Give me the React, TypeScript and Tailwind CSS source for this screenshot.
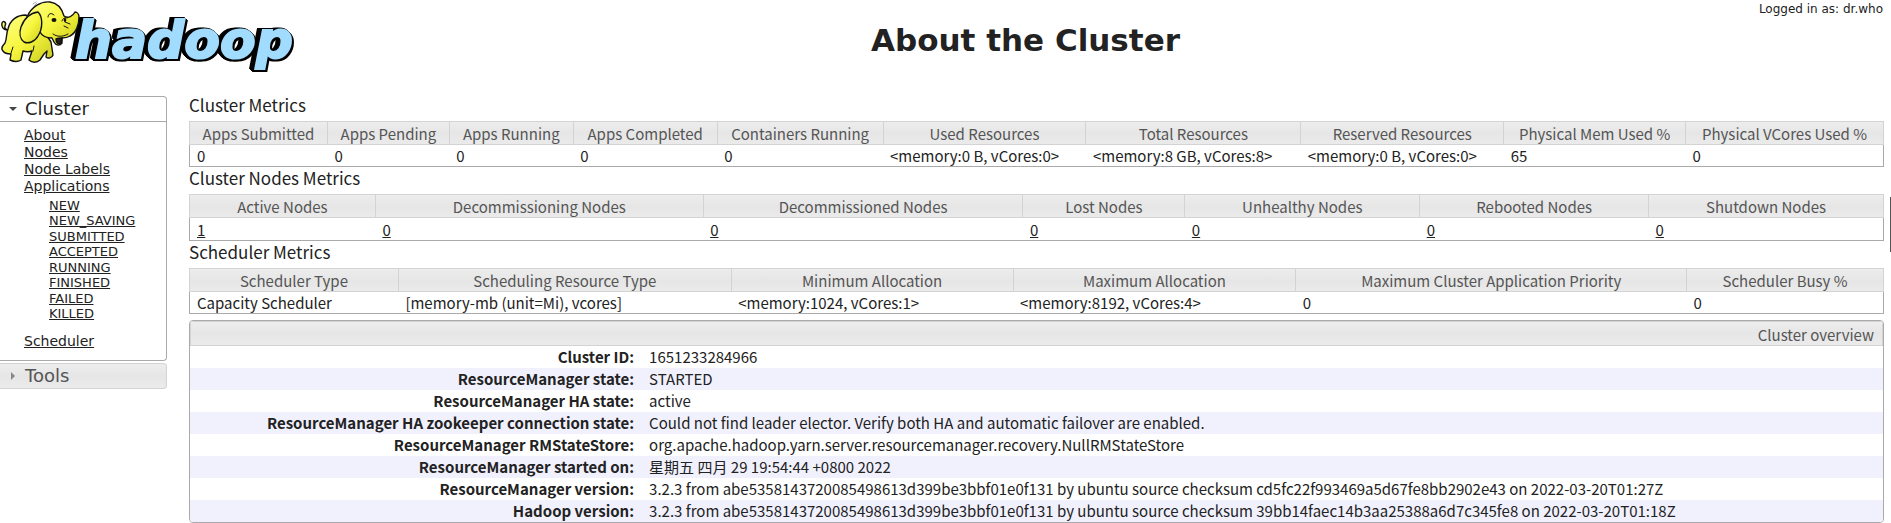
const links = ["About", "Nodes", "Node Labels", "Applications"];

const appStates = [
  "NEW",
  "NEW_SAVING",
  "SUBMITTED",
  "ACCEPTED",
  "RUNNING",
  "FINISHED",
  "FAILED",
  "KILLED",
];

// width is the column's share of the table
type Column = { title: string; value: string; width: number };

const clusterMetrics: Column[] = [
  { title: "Apps Submitted", value: "0", width: 138 },
  { title: "Apps Pending", value: "0", width: 122 },
  { title: "Apps Running", value: "0", width: 124 },
  { title: "Apps Completed", value: "0", width: 144 },
  { title: "Containers Running", value: "0", width: 166 },
  { title: "Used Resources", value: "<memory:0 B, vCores:0>", width: 203 },
  { title: "Total Resources", value: "<memory:8 GB, vCores:8>", width: 215 },
  { title: "Reserved Resources", value: "<memory:0 B, vCores:0>", width: 203 },
  { title: "Physical Mem Used %", value: "65", width: 182 },
  { title: "Physical VCores Used %", value: "0", width: 198 },
];

const nodesMetrics: Column[] = [
  { title: "Active Nodes", value: "1", width: 186 },
  { title: "Decommissioning Nodes", value: "0", width: 328 },
  { title: "Decommissioned Nodes", value: "0", width: 320 },
  { title: "Lost Nodes", value: "0", width: 162 },
  { title: "Unhealthy Nodes", value: "0", width: 235 },
  { title: "Rebooted Nodes", value: "0", width: 229 },
  { title: "Shutdown Nodes", value: "0", width: 235 },
];

const schedulerMetrics: Column[] = [
  { title: "Scheduler Type", value: "Capacity Scheduler", width: 209 },
  { title: "Scheduling Resource Type", value: "[memory-mb (unit=Mi), vcores]", width: 333 },
  { title: "Minimum Allocation", value: "<memory:1024, vCores:1>", width: 282 },
  { title: "Maximum Allocation", value: "<memory:8192, vCores:4>", width: 283 },
  { title: "Maximum Cluster Application Priority", value: "0", width: 391 },
  { title: "Scheduler Busy %", value: "0", width: 197 },
];

const overview = [
  ["Cluster ID:", "1651233284966"],
  ["ResourceManager state:", "STARTED"],
  ["ResourceManager HA state:", "active"],
  [
    "ResourceManager HA zookeeper connection state:",
    "Could not find leader elector. Verify both HA and automatic failover are enabled.",
  ],
  [
    "ResourceManager RMStateStore:",
    "org.apache.hadoop.yarn.server.resourcemanager.recovery.NullRMStateStore",
  ],
  ["ResourceManager started on:", "星期五 四月 29 19:54:44 +0800 2022"],
  [
    "ResourceManager version:",
    "3.2.3 from abe5358143720085498613d399be3bbf01e0f131 by ubuntu source checksum cd5fc22f993469a5d67fe8bb2902e43 on 2022-03-20T01:27Z",
  ],
  [
    "Hadoop version:",
    "3.2.3 from abe5358143720085498613d399be3bbf01e0f131 by ubuntu source checksum 39bb14faec14b3aa25388a6d7c345fe8 on 2022-03-20T01:18Z",
  ],
];

function Logo() {
  return (
    <svg width="300" height="74" viewBox="0 0 300 74" role="img" aria-label="hadoop">
      <defs>
        <linearGradient id="skin" x1="0" y1="0" x2="1" y2="1">
          <stop offset="0" stopColor="#ffff8a" />
          <stop offset="0.5" stopColor="#f6f63e" />
          <stop offset="1" stopColor="#c9c91e" />
        </linearGradient>
      </defs>
      <text
        x="75"
        y="58"
        fontSize="52"
        fontWeight="bold"
        fontStyle="italic"
        fill="#a1dcff"
        stroke="#a1dcff"
        strokeWidth="2"
        className="font-['DejaVu_Sans',sans-serif] [filter:drop-shadow(1px_1px_0_#000)_drop-shadow(-1px_-1px_0_#000)_drop-shadow(1px_1px_0_#000)_drop-shadow(-4px_0_0_#000)]"
      >
        hadoop
      </text>
      <g stroke="#111" strokeWidth="1.4" strokeLinejoin="round" strokeLinecap="round" fill="url(#skin)">
        <path d="M7 30C3 30 1 26 2 23C3 20 7 22 5 26C4 28 6 30 9 30" />
        <path d="M26 15C17 15 10 20 8 29C6 34 7 39 5 43C2 46 1 49 3 51C5 54 8 54 11 54L10 60C14 62 18 62 21 60L23 51C26 52 29 52 32 51L29 60C32 63 37 63 40 60L44 54L47 51L46 57C48 59 52 58 53 55L51 42L42 28Z" />
        <path d="M27 17C31 7 41 1 50 2C58 3 62 9 64 16C68 19 73 16 75 12C77 12 79 14 79 17C79 25 76 33 70 36C67 38 64 38 62 38L62 43C60 46 56 46 54 42L52 38C46 38 42 36 40 32Z" />
        <path d="M56 39C58 38 60 38 62 38L61 43C58 45 56 43 56 39Z" fill="#222" />
        <path d="M38 12C30 13 24 19 21 27C19 33 20 39 24 42C28 44 35 42 38 36C43 28 43 17 38 12Z" />
        <path d="M48 17C48 14 51 12 54 15M62 21C63 18 65 17 67 18M53 34C58 38 65 36 68 34M64 26L68 28M65 22L70 24M33 51L34 46M13 47L11 53" fill="none" strokeWidth="1" />
        <ellipse cx="54" cy="20" rx="2.5" ry="2" fill="#111" stroke="none" />
        <ellipse cx="65" cy="20" rx="1.3" ry="2" fill="#111" stroke="none" />
        <path d="M33 4L36 2M34 6L37 3" stroke="#aaa" strokeWidth="1" />
      </g>
    </svg>
  );
}

function SideNav() {
  return (
    <nav className="mt-[2px] w-[167px] shrink-0 text-[#222]">
      <h3 className="flex h-[26px] items-center rounded-tr border border-l-0 border-[#aaa] pl-[9px] text-lg">
        <svg width="8" height="5" viewBox="0 0 8 5" fill="#454545">
          <path d="M0 0H8L4 4Z" />
        </svg>
        <a href="#cluster" className="pl-2">Cluster</a>
      </h3>
      <div className="rounded-br border border-t-0 border-l-0 border-[#aaa] pt-[5px] pb-[10px] pl-6 text-sm leading-[17px]">
        <ul>
          {links.map((link) => (
            <li key={link}>
              <a href="#link" className="underline">{link}</a>
            </li>
          ))}
        </ul>
        <ul className="mt-[3px] flex h-[123px] flex-col justify-between pl-[25px] text-[13px] leading-[15px]">
          {appStates.map((state) => (
            <li key={state}>
              <a href="#state" className="underline">{state}</a>
            </li>
          ))}
        </ul>
        <a href="#scheduler" className="mt-3 inline-block underline">Scheduler</a>
      </div>
      <h3 className="mt-[2px] flex h-[26px] items-center rounded-r border border-l-0 border-[#d3d3d3] bg-linear-to-b from-[#ededed] via-[#e6e6e6] to-[#ebebeb] pl-[9px] text-lg text-[#555]">
        <svg width="8" height="8" viewBox="0 0 8 8" fill="#888">
          <path d="M2 0V8L6 4Z" />
        </svg>
        <a href="#tools" className="pl-2">Tools</a>
      </h3>
    </nav>
  );
}

function MetricsTable({ title, columns, linked }: { title: string; columns: Column[]; linked?: boolean }) {
  const total = columns.reduce((sum, column) => sum + column.width, 0);

  return (
    <section>
      <h3 className="h-[27px] text-[17px] leading-[22px]">{title}</h3>
      <table className="w-full table-fixed border-collapse border border-[#aaa] text-left leading-[21px]">
        <thead>
          <tr className="bg-linear-to-b from-[#ededed] via-[#e6e6e6] to-[#ebebeb] text-[#555]">
            {columns.map((column) => (
              <th
                key={column.title}
                style={{ width: `${(column.width / total) * 100}%` }}
                className="h-[23px] border border-[#d3d3d3] p-0 text-center font-normal whitespace-nowrap"
              >
                {column.title}
              </th>
            ))}
          </tr>
        </thead>
        <tbody>
          <tr className={linked ? "h-[23px]" : "h-[22px]"}>
            {columns.map((column) => (
              <td key={column.title} className="px-[7px] py-0 whitespace-nowrap">
                {linked ? <a href="#nodes" className="underline">{column.value}</a> : column.value}
              </td>
            ))}
          </tr>
        </tbody>
      </table>
    </section>
  );
}

export default function App() {
  return (
    <div className="relative bg-white font-['DejaVu_Sans',sans-serif] text-[#222]">
      <header className="flex h-[94px] items-start">
        <div className="w-[300px] shrink-0">
          <Logo />
        </div>
        <h1 className="flex-1 pt-5 pl-[160px] text-center text-[31px] leading-10 font-bold">About the Cluster</h1>
        <p className="w-[300px] shrink-0 pr-2 text-right text-xs leading-[18px]">Logged in as: dr.who</p>
      </header>

      <div className="flex items-start">
        <SideNav />
        <main className="min-w-0 flex-1 pr-[7px] pl-[22px] font-['Noto_Sans_CJK_SC',sans-serif] text-[15px]">
          <MetricsTable title="Cluster Metrics" columns={clusterMetrics} />
          <MetricsTable title="Cluster Nodes Metrics" columns={nodesMetrics} linked />
          <MetricsTable title="Scheduler Metrics" columns={schedulerMetrics} />

          <div className="mt-[6px] overflow-hidden rounded border border-[#aaa]">
            <table className="w-full table-fixed border-collapse leading-[22px]">
              <caption className="h-[25px] border border-[#d3d3d3] bg-linear-to-b from-[#ededed] via-[#e6e6e6] to-[#ebebeb] pr-2 text-right leading-[26px] text-[#555]">
                Cluster overview
              </caption>
              <tbody>
                {overview.map(([label, value]) => (
                  <tr key={label} className="even:bg-[#f1f1fe]">
                    <th className="w-[27%] py-0 pr-[13px] text-right font-bold whitespace-nowrap">{label}</th>
                    <td className="py-0 pl-[2px] whitespace-nowrap">{value}</td>
                  </tr>
                ))}
              </tbody>
            </table>
          </div>
        </main>
      </div>

      <span className="absolute top-[197px] right-0 h-[55px] w-px bg-[#555]" />
    </div>
  );
}
